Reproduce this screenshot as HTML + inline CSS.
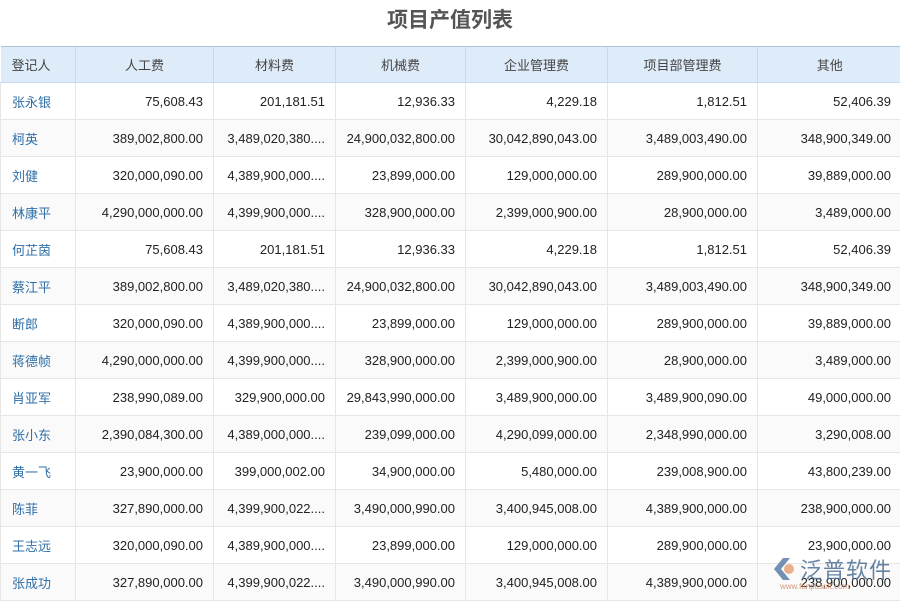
<!DOCTYPE html><html><head><meta charset="utf-8"><style>
body{margin:0;width:900px;height:600px;overflow:hidden;background:#fff;font-family:"Liberation Sans","Noto Sans CJK SC",sans-serif;}
.t{position:absolute;top:5px;left:0;width:900px;text-align:center;font-size:21px;font-weight:bold;color:#555;line-height:32px}
table{position:absolute;top:46px;left:0;border-collapse:collapse;table-layout:fixed;width:901px;font-size:13px}
th{background:#deecfa;color:#444;font-weight:normal;height:35px;padding:0;border-top:1px solid #a9c4dc;border-left:1px solid #c6dbef;border-bottom:1px solid #c6dbef;text-align:center}
td{height:36px;border:1px solid #e6e6e6;text-align:right;padding:0 10px 0 0;color:#222;white-space:nowrap;overflow:hidden}
td:first-child{text-align:left;padding-left:11px;color:#2f6fa8}
th:first-child{text-align:left;padding-left:11px;border-left:none}
tr:nth-child(odd) td{background:#fafafa}
</style></head><body>
<div class="t">项目产值列表</div>
<table>
<colgroup><col style="width:75px"><col style="width:138px"><col style="width:122px"><col style="width:130px"><col style="width:142px"><col style="width:150px"><col style="width:144px"></colgroup>
<tr><th>登记人</th><th>人工费</th><th>材料费</th><th>机械费</th><th>企业管理费</th><th>项目部管理费</th><th>其他</th></tr>
<tr><td>张永银</td><td>75,608.43</td><td>201,181.51</td><td>12,936.33</td><td>4,229.18</td><td>1,812.51</td><td>52,406.39</td></tr>
<tr><td>柯英</td><td>389,002,800.00</td><td>3,489,020,380....</td><td>24,900,032,800.00</td><td>30,042,890,043.00</td><td>3,489,003,490.00</td><td>348,900,349.00</td></tr>
<tr><td>刘健</td><td>320,000,090.00</td><td>4,389,900,000....</td><td>23,899,000.00</td><td>129,000,000.00</td><td>289,900,000.00</td><td>39,889,000.00</td></tr>
<tr><td>林康平</td><td>4,290,000,000.00</td><td>4,399,900,000....</td><td>328,900,000.00</td><td>2,399,000,900.00</td><td>28,900,000.00</td><td>3,489,000.00</td></tr>
<tr><td>何芷茵</td><td>75,608.43</td><td>201,181.51</td><td>12,936.33</td><td>4,229.18</td><td>1,812.51</td><td>52,406.39</td></tr>
<tr><td>蔡江平</td><td>389,002,800.00</td><td>3,489,020,380....</td><td>24,900,032,800.00</td><td>30,042,890,043.00</td><td>3,489,003,490.00</td><td>348,900,349.00</td></tr>
<tr><td>断郎</td><td>320,000,090.00</td><td>4,389,900,000....</td><td>23,899,000.00</td><td>129,000,000.00</td><td>289,900,000.00</td><td>39,889,000.00</td></tr>
<tr><td>蒋德帧</td><td>4,290,000,000.00</td><td>4,399,900,000....</td><td>328,900,000.00</td><td>2,399,000,900.00</td><td>28,900,000.00</td><td>3,489,000.00</td></tr>
<tr><td>肖亚军</td><td>238,990,089.00</td><td>329,900,000.00</td><td>29,843,990,000.00</td><td>3,489,900,000.00</td><td>3,489,900,090.00</td><td>49,000,000.00</td></tr>
<tr><td>张小东</td><td>2,390,084,300.00</td><td>4,389,000,000....</td><td>239,099,000.00</td><td>4,290,099,000.00</td><td>2,348,990,000.00</td><td>3,290,008.00</td></tr>
<tr><td>黄一飞</td><td>23,900,000.00</td><td>399,000,002.00</td><td>34,900,000.00</td><td>5,480,000.00</td><td>239,008,900.00</td><td>43,800,239.00</td></tr>
<tr><td>陈菲</td><td>327,890,000.00</td><td>4,399,900,022....</td><td>3,490,000,990.00</td><td>3,400,945,008.00</td><td>4,389,900,000.00</td><td>238,900,000.00</td></tr>
<tr><td>王志远</td><td>320,000,090.00</td><td>4,389,900,000....</td><td>23,899,000.00</td><td>129,000,000.00</td><td>289,900,000.00</td><td>23,900,000.00</td></tr>
<tr><td>张成功</td><td>327,890,000.00</td><td>4,399,900,022....</td><td>3,490,000,990.00</td><td>3,400,945,008.00</td><td>4,389,900,000.00</td><td>238,900,000.00</td></tr>
</table>
<div style="position:absolute;left:770px;top:553px;width:130px;height:40px;opacity:.85">
<svg width="26" height="28" style="position:absolute;left:0;top:2px"><path d="M4 14 L13 3 L20 3 L11 14 L20 25 L13 25Z" fill="#5b7fa8"/><circle cx="19" cy="14" r="5" fill="#e8a27a"/></svg>
<span style="position:absolute;left:30px;top:0;font-size:22px;color:#4d6f95;letter-spacing:1px">泛普软件</span>
<span style="position:absolute;left:10px;top:29px;font-size:8px;color:#c98a6a">www.fanpusoft.com</span>
</div>
</body></html>
